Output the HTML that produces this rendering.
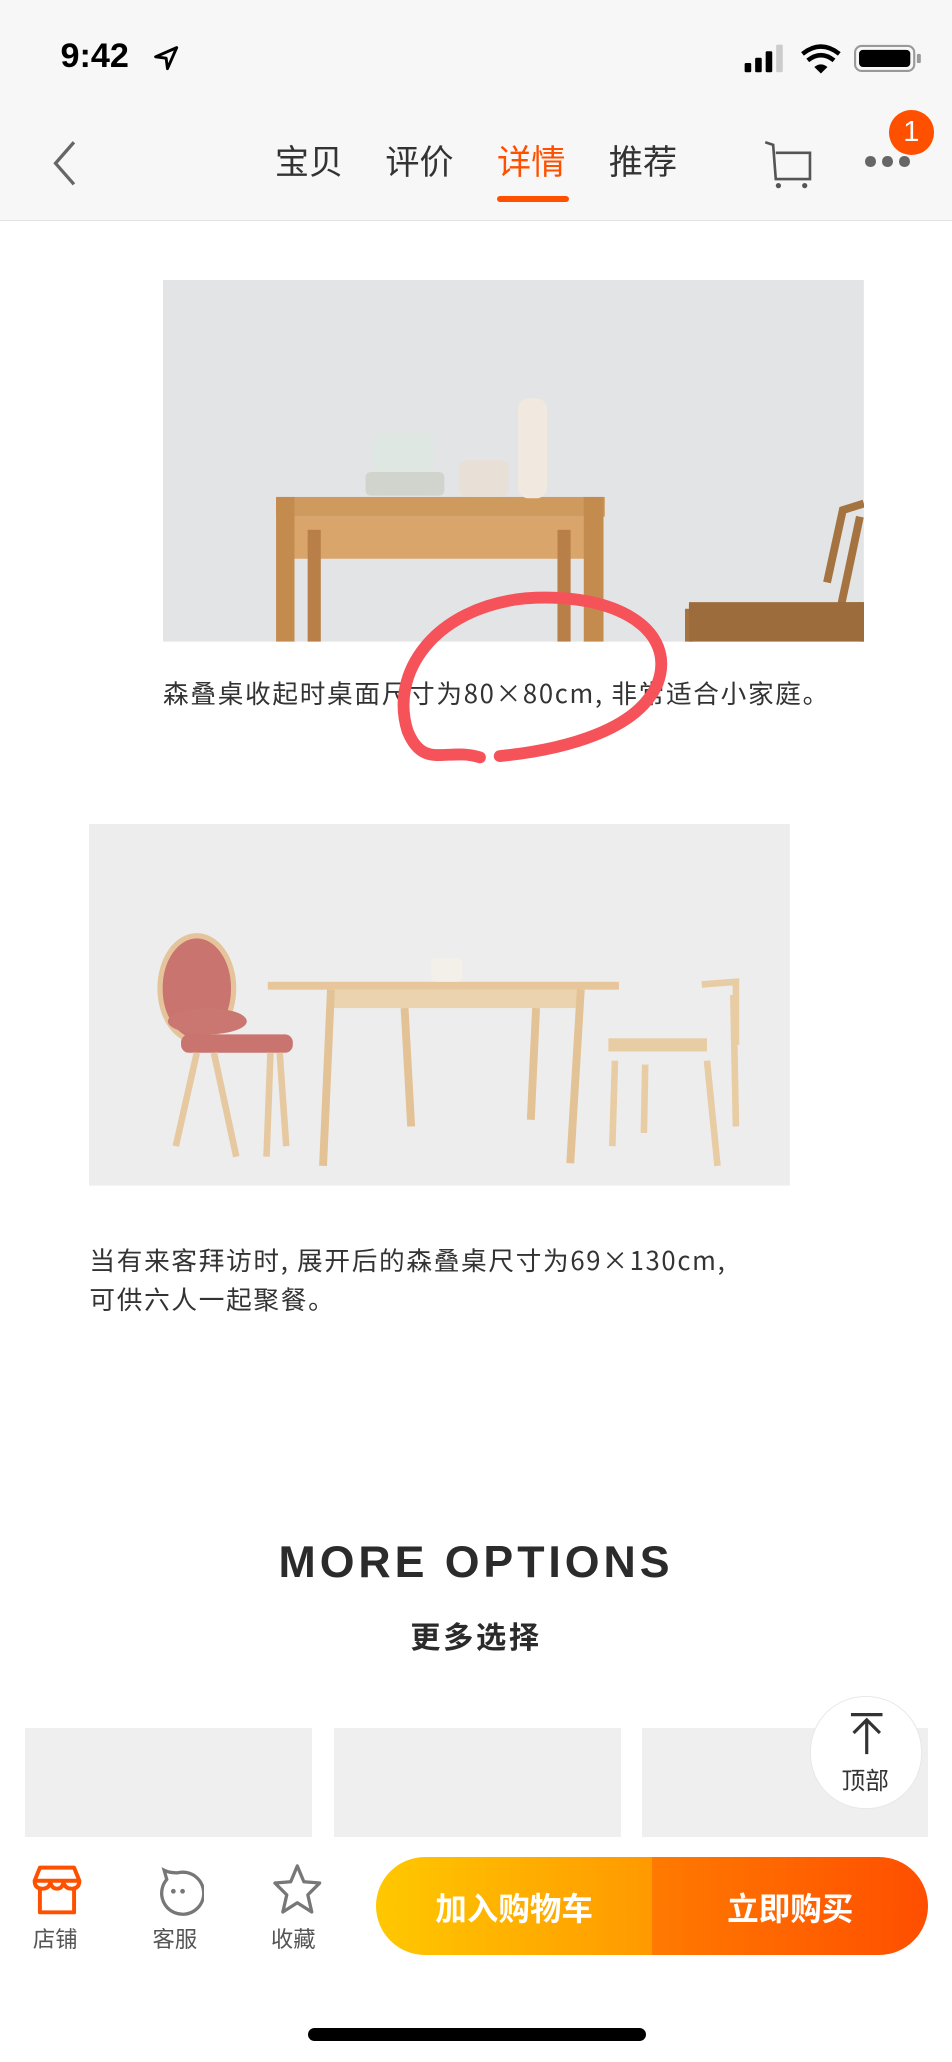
<!DOCTYPE html>
<html><head><meta charset="utf-8"><style>
html,body{margin:0;padding:0;}
html{width:952px;height:2061px;overflow:hidden;background:#fff;}
body{zoom:1.31492;width:724px;height:1568px;position:relative;font-family:"Liberation Sans","Noto Sans CJK SC",sans-serif;overflow:hidden;}
.a{position:absolute;}
.tab{position:absolute;top:102px;font-size:26px;color:#333;}
.cap{position:absolute;font-family:"Noto Sans CJK SC",sans-serif;font-size:19.5px;line-height:26px;color:#333;letter-spacing:1.3px;white-space:nowrap;}
.lbl{position:absolute;top:1462px;font-size:17px;color:#555;}
</style></head><body>
<div class="a" style="left:0;top:0;width:724px;height:167px;background:#f7f7f7;border-bottom:1px solid #e2e2e2;"></div>
<div class="a" style="left:46px;top:28px;font-size:26px;font-weight:bold;color:#000;">9:42</div>
<svg class="a" style="left:116px;top:34px" width="20" height="20" viewBox="0 0 20 20"><path d="M18 2 L2 9 L10 10 L11 18 Z" fill="none" stroke="#000" stroke-width="2.2" stroke-linejoin="round"/></svg>
<svg class="a" style="left:564px;top:32px" width="140" height="26" viewBox="0 0 140 26">
<rect x="2" y="16" width="5" height="7" rx="1" fill="#000"/><rect x="10" y="12" width="5" height="11" rx="1" fill="#000"/><rect x="18" y="7" width="5" height="16" rx="1" fill="#000"/><rect x="26" y="2" width="5" height="21" rx="1" fill="#ccc"/>
<path d="M46 9 Q60 -2 74 9" fill="none" stroke="#000" stroke-width="3.4"/><path d="M50 14 Q60 6 70 14" fill="none" stroke="#000" stroke-width="3.4"/><path d="M55 19 L60 24 L65 19 Q60 15 55 19Z" fill="#000"/>
<rect x="86" y="3" width="45" height="19" rx="5" fill="none" stroke="#999" stroke-width="1.6"/><rect x="89" y="6" width="39" height="13" rx="3" fill="#000"/><rect x="133" y="9" width="3" height="7" rx="1" fill="#999"/></svg>
<svg class="a" style="left:34px;top:104px" width="30" height="40"><path d="M22 4 L8 20 L22 36" fill="none" stroke="#666" stroke-width="2.5"/></svg>
<div class="tab" style="left:209px">宝贝</div>
<div class="tab" style="left:293px">评价</div>
<div class="tab" style="left:378px;color:#ff5000">详情</div>
<div class="tab" style="left:463px">推荐</div>
<div class="a" style="left:378px;top:149px;width:55px;height:5px;border-radius:3px;background:#ff5000"></div>
<svg class="a" style="left:578px;top:104px" width="42" height="40"><path d="M4 4 L10 6 L12 32 L38 32 L38 12 L12 12" fill="none" stroke="#555" stroke-width="2"/><circle cx="14" cy="37" r="2" fill="#555"/><circle cx="34" cy="37" r="2" fill="#555"/></svg>
<div class="a" style="left:658px;top:119px;width:8px;height:8px;border-radius:4px;background:#666"></div>
<div class="a" style="left:671px;top:119px;width:8px;height:8px;border-radius:4px;background:#666"></div>
<div class="a" style="left:684px;top:119px;width:8px;height:8px;border-radius:4px;background:#666"></div>
<div class="a" style="left:676px;top:84px;width:34px;height:34px;border-radius:17px;background:#ff5000;color:#fff;font-size:22px;text-align:center;line-height:34px">1</div>

<svg class="a" style="left:124px;top:213px" width="533" height="275" viewBox="0 0 533 275">
<rect width="533" height="275" fill="#e3e4e6"/>
<rect x="86" y="165" width="250" height="15" fill="#cf9a5e"/>
<rect x="96" y="180" width="235" height="32" fill="#d9a56b"/>
<rect x="86" y="165" width="14" height="110" fill="#c48b4f"/><rect x="110" y="190" width="10" height="85" fill="#b88048"/>
<rect x="320" y="165" width="15" height="110" fill="#c48b4f"/><rect x="300" y="190" width="10" height="85" fill="#b88048"/>
<rect x="160" y="116" width="46" height="48" rx="6" fill="#dfe7e2"/><rect x="154" y="146" width="60" height="18" rx="4" fill="#d0d4cc"/>
<rect x="225" y="137" width="38" height="28" rx="6" fill="#e8e0d7"/>
<rect x="270" y="90" width="22" height="76" rx="8" fill="#f1e9e0"/>
<path d="M400 250 L400 275 M400 250 L533 248 L533 275 M505 230 L517 175 L533 170 M512 265 L530 180" stroke="#a5733f" stroke-width="6" fill="none"/>
<rect x="400" y="245" width="133" height="30" fill="#9c6c3c"/></svg>
<div class="cap" style="left:124px;top:514px">森叠桌收起时桌面尺寸为80×80cm, 非常适合小家庭。</div>
<svg class="a" style="left:0;top:0" width="724" height="600"><path d="M365 576 C340 568 322 586 310 556 C296 512 330 462 400 455 C470 450 515 480 500 520 C485 555 430 570 380 575" fill="none" stroke="#f5525a" stroke-width="9" stroke-linecap="round"/></svg>

<svg class="a" style="left:68px;top:627px" width="533" height="275" viewBox="0 0 533 275">
<rect width="533" height="275" fill="#ededed"/>
<ellipse cx="82" cy="125" rx="28" ry="40" fill="#c9746f" stroke="#e5c49c" stroke-width="4"/>
<rect x="70" y="160" width="85" height="14" rx="6" fill="#c9746f"/><ellipse cx="90" cy="150" rx="30" ry="10" fill="#c97770"/>
<path d="M82 174 L66 245 M145 174 L150 245 M95 174 L112 253 M138 174 L135 253" stroke="#e6c9a1" stroke-width="5"/>
<rect x="136" y="120" width="267" height="6" fill="#e7c69c"/><rect x="185" y="126" width="190" height="14" fill="#ecd3af"/>
<path d="M184 126 L178 260 M374 126 L366 258 M240 140 L245 230 M340 140 L336 225" stroke="#e3c295" stroke-width="6"/>
<rect x="260" y="102" width="24" height="18" rx="4" fill="#f3f0ea"/>
<path d="M400 180 L398 245 M470 180 L478 260 M423 183 L422 235 M490 130 L492 230 M466 122 L492 120 L492 168" stroke="#e8cca3" stroke-width="5" fill="none"/><rect x="395" y="163" width="75" height="10" fill="#e8cca3"/></svg>
<div class="cap" style="left:68px;top:945px">当有来客拜访时, 展开后的森叠桌尺寸为69×130cm,</div>
<div class="cap" style="left:68px;top:975px">可供六人一起聚餐。</div>

<div class="a" style="left:0;width:724px;top:1170px;text-align:center;font-size:34px;font-weight:bold;color:#2b2b2b;letter-spacing:3px">MORE OPTIONS</div>
<div class="a" style="left:0;width:724px;top:1227px;text-align:center;font-size:23px;font-weight:bold;color:#2b2b2b;letter-spacing:2px">更多选择</div>
<div class="a" style="left:19px;top:1314px;width:218px;height:84px;background:#efefef"></div>
<div class="a" style="left:254px;top:1314px;width:218px;height:84px;background:#efefef"></div>
<div class="a" style="left:488px;top:1314px;width:218px;height:84px;background:#efefef"></div>
<div class="a" style="left:616px;top:1290px;width:84px;height:84px;border-radius:42px;background:#fff;border:1px solid #e8e8e8"></div>
<svg class="a" style="left:644px;top:1302px" width="30" height="34"><path d="M3 2 H27 M15 6 V32 M5 16 L15 6 L25 16" fill="none" stroke="#333" stroke-width="2.4"/></svg>
<div class="a" style="left:640px;top:1340px;font-size:18px;color:#333">顶部</div>

<div class="a" style="left:0;top:1397px;width:724px;height:171px;background:#fff"></div>
<svg class="a" style="left:24px;top:1418px" width="38" height="40"><path d="M6 2 H32 L36 12 Q36 18 30 18 Q25 18 24 13 Q23 18 19 18 Q15 18 14 13 Q13 18 8 18 Q2 18 2 12 Z M2 12 H36 M6 18 V36 H32 V18" fill="none" stroke="#ff5000" stroke-width="3" stroke-linejoin="round"/></svg>
<svg class="a" style="left:115px;top:1418px" width="40" height="40"><path d="M10 4 L12 11 A16 16 0 1 0 20 6 Q14 6 10 4Z" fill="none" stroke="#777" stroke-width="2.5"/><circle cx="17" cy="20" r="1.8" fill="#777"/><circle cx="24" cy="20" r="1.8" fill="#777"/></svg>
<svg class="a" style="left:206px;top:1416px" width="40" height="40"><path d="M20 3 L25 15 L37 16 L28 25 L31 38 L20 31 L9 38 L12 25 L3 16 L15 15 Z" fill="none" stroke="#777" stroke-width="2.5" stroke-linejoin="round"/></svg>
<div class="lbl" style="left:25px">店铺</div>
<div class="lbl" style="left:116px">客服</div>
<div class="lbl" style="left:206px">收藏</div>
<div class="a" style="left:286px;top:1412px;width:420px;height:75px;border-radius:38px;overflow:hidden;">
<div class="a" style="left:0;top:0;width:210px;height:75px;background:linear-gradient(90deg,#ffc800,#ff9900)"></div>
<div class="a" style="left:210px;top:0;width:210px;height:75px;background:linear-gradient(90deg,#ff7a00,#ff4e00)"></div>
<div class="a" style="left:0;width:210px;top:21px;text-align:center;font-size:24px;font-weight:bold;color:#fff">加入购物车</div>
<div class="a" style="left:210px;width:210px;top:21px;text-align:center;font-size:24px;font-weight:bold;color:#fff">立即购买</div></div>
<div class="a" style="left:234px;top:1542px;width:257px;height:10px;border-radius:5px;background:#000"></div>
</body></html>
